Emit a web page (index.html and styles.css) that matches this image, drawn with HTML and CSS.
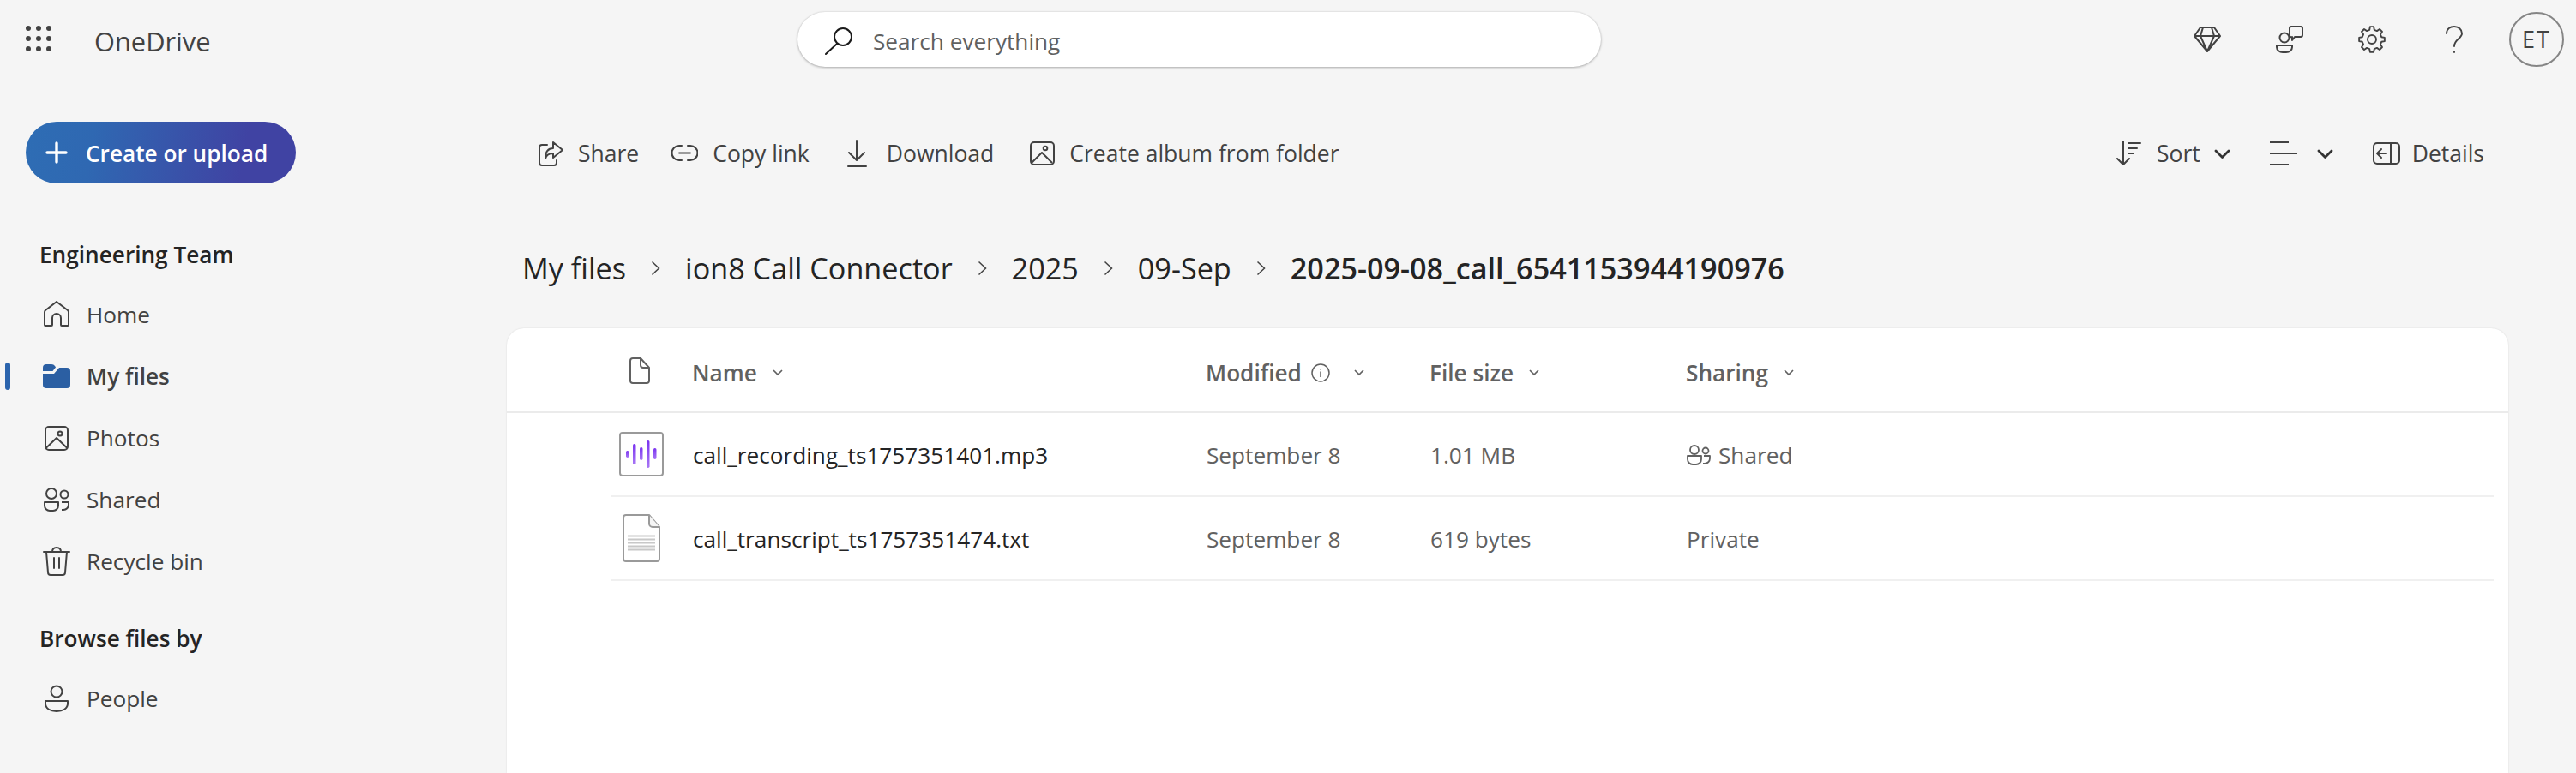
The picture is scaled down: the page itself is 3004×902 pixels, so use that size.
FILE: index.html
```html
<!DOCTYPE html>
<html lang="en">
<head>
<meta charset="utf-8">
<title>OneDrive</title>
<link rel="stylesheet" href="styles.css">
</head>
<body>
<header class="topbar">
  <div class="brand">
    <svg class="waffle" width="30" height="30" viewBox="0 0 30 30" fill="#424242"><circle cx="3" cy="3" r="3"/><circle cx="15" cy="3" r="3"/><circle cx="27" cy="3" r="3"/><circle cx="3" cy="15" r="3"/><circle cx="15" cy="15" r="3"/><circle cx="27" cy="15" r="3"/><circle cx="3" cy="27" r="3"/><circle cx="15" cy="27" r="3"/><circle cx="27" cy="27" r="3"/></svg>
    <span class="brand-name">OneDrive</span>
  </div>
  <div class="search">
    <svg class="search-ico" width="33" height="32" viewBox="0 0 33 32" fill="none" stroke="#1a1a1a" stroke-width="2" stroke-linecap="round"><circle cx="21" cy="11" r="10"/><path d="M14 19 1 31"/></svg>
    <span class="search-text">Search everything</span>
  </div>
  <div class="top-actions">
    <svg width="32" height="32" viewBox="0 0 32 32" fill="none" stroke="#424242" stroke-width="2" stroke-linejoin="round"><path d="M8 2h16l7 10-15 18L1 12zM1 12h30M11 2l-3 10 8 18 8-18-3-10"/></svg>
    <svg width="32" height="32" viewBox="0 0 32 32" fill="none" stroke="#424242" stroke-width="2" stroke-linejoin="round"><circle cx="10" cy="14" r="5.5"/><path d="M1 23h18v2a7 6 0 0 1-7 6H8a7 6 0 0 1-7-6z"/><path d="M18 1h11a2 2 0 0 1 2 2v8a2 2 0 0 1-2 2h-7l-3 4v-4a2 2 0 0 1-3-2V3a2 2 0 0 1 2-2z"/></svg>
    <svg width="32" height="32" viewBox="0 0 32 32" fill="none" stroke="#424242" stroke-width="1.9" stroke-linejoin="round"><polygon points="13.2,4.8 13.9,1.15 18.1,1.15 18.8,4.8 21.9,6.1 25,4 28,7 25.9,10.1 27.2,13.2 30.85,13.9 30.85,18.1 27.2,18.8 25.9,21.9 28,25 25,28 21.9,25.9 18.8,27.2 18.1,30.85 13.9,30.85 13.2,27.2 10.1,25.9 7,28 4,25 6.1,21.9 4.8,18.8 1.15,18.1 1.15,13.9 4.8,13.2 6.1,10.1 4,7 7,4 10.1,6.1"/><circle cx="16" cy="16" r="5"/></svg>
    <svg width="32" height="32" viewBox="0 0 32 32" fill="none" stroke="#424242" stroke-width="1.9" stroke-linecap="round"><path d="M7 9c0-5 4-8 9-8s9 3.500 9 8c0 6-9 7-9 15"/><path d="M16 30v1"/></svg>
    <div class="avatar">ET</div>
  </div>
</header>

<div class="page">
  <nav class="sidebar">
    <button class="create" type="button">
      <svg width="26" height="26" viewBox="0 0 26 26" fill="none" stroke="#fff" stroke-width="3.400" stroke-linecap="round"><path d="M13 2v22M2 13h22"/></svg>
      <span class="create-label">Create or upload</span>
    </button>
    <h2 class="nav-title nav-title-first">Engineering Team</h2>
    <a class="nav-item">
      <svg width="32" height="32" viewBox="0 0 32 32" fill="none" stroke="#424242" stroke-width="2" stroke-linejoin="round"><path d="M3 29a1 1 0 0 1-1-1V13a3 3 0 0 1 1-2L16 1l13 10a3 3 0 0 1 1 2v15a1 1 0 0 1-1 1h-7a1 1 0 0 1-1-1v-8a5 5 0 0 0-10 0v8a1 1 0 0 1-1 1z"/></svg>
      <span>Home</span>
    </a>
    <a class="nav-item nav-item-active">
      <svg width="32" height="28" viewBox="0 0 32 28" fill="#2b5fa3"><path d="M4 0h6c2 0 3 .7 4 2l1 1.500L11.500 8H0V4a4 4 0 0 1 4-4z"/><path d="M0 11h13l6-7h9a4 4 0 0 1 4 4v16a4 4 0 0 1-4 4H4a4 4 0 0 1-4-4z"/></svg>
      <span>My files</span>
    </a>
    <a class="nav-item">
      <svg width="32" height="30" viewBox="0 0 32 30" fill="none" stroke="#424242" stroke-width="2" stroke-linejoin="round"><rect x="3" y="2" width="26" height="27" rx="4"/><circle cx="20" cy="10" r="2.500"/><path d="M3.500 27 16 15l12.500 12"/></svg>
      <span>Photos</span>
    </a>
    <a class="nav-item">
      <svg width="32" height="30" viewBox="0 0 32 30" fill="none" stroke="#424242" stroke-width="2" stroke-linejoin="round"><circle cx="10" cy="8" r="6"/><circle cx="25" cy="9" r="4.500"/><path d="M2 18h16v4a6 6 0 0 1-6 6H8a6 6 0 0 1-6-6z"/><path d="M22 18h8v3a6 6 0 0 1-6 6h-2"/></svg>
      <span>Shared</span>
    </a>
    <a class="nav-item">
      <svg width="32" height="34" viewBox="0 0 32 34" fill="none" stroke="#424242" stroke-width="2" stroke-linecap="round"><path d="M1 6h30M11 6c0-3 2-5 5-5s5 2 5 5M4 6l2 24a3 3 0 0 0 3 3h14a3 3 0 0 0 3-3l2-24M13 13v12M19 13v12"/></svg>
      <span>Recycle bin</span>
    </a>
    <h2 class="nav-title nav-title-second">Browse files by</h2>
    <a class="nav-item">
      <svg width="32" height="32" viewBox="0 0 32 32" fill="none" stroke="#424242" stroke-width="2" stroke-linejoin="round"><circle cx="16" cy="8" r="6.500"/><path d="M3 19h26v3c0 6-6 9-13 9S3 28 3 22z"/></svg>
      <span>People</span>
    </a>
  </nav>

  <main class="content">
    <div class="toolbar">
      <div class="tool tool-share">
        <svg width="29" height="30" viewBox="0 0 29 30" fill="none" stroke="#424242" stroke-width="2" stroke-linejoin="round" stroke-linecap="round"><path d="M10 5H4a3 3 0 0 0-3 3v18a3 3 0 0 0 3 3h14a3 3 0 0 0 3-3v-3"/><path d="M17 2l11 9-11 9v-5c-5 0-8 2-9 6 0-8 3-12 9-12z"/></svg>
        <span>Share</span>
      </div>
      <div class="tool">
        <svg width="31" height="22" viewBox="0 0 31 22" fill="none" stroke="#424242" stroke-width="2" stroke-linecap="round"><path d="M12 2H9a8.500 8.500 0 0 0 0 17h3M19 2h3a8.500 8.500 0 0 1 0 17h-3M9 10.500h13"/></svg>
        <span>Copy link</span>
      </div>
      <div class="tool">
        <svg width="29" height="32" viewBox="0 0 29 32" fill="none" stroke="#424242" stroke-width="2" stroke-linecap="round" stroke-linejoin="round"><path d="M11 1v22M2 15l9 9 9-9M1 31h21"/></svg>
        <span>Download</span>
      </div>
      <div class="tool tool-album">
        <svg width="29" height="28" viewBox="0 0 29 28" fill="none" stroke="#424242" stroke-width="2" stroke-linejoin="round"><rect x="1" y="1" width="27" height="26" rx="4"/><circle cx="18" cy="8" r="2.300"/><path d="M2 25 14 13l12 12"/></svg>
        <span>Create album from folder</span>
      </div>
      <div class="toolbar-right">
        <svg class="gap-18" width="29" height="30" viewBox="0 0 29 30" fill="none" stroke="#424242" stroke-width="2" stroke-linecap="round" stroke-linejoin="round"><path d="M8 1v27M1 21l7 7 7-7M14 3h14M14 9h10M14 15h6"/></svg>
        <span class="gap-16">Sort</span>
        <svg width="19" height="11" viewBox="0 0 19 11" fill="none" stroke="#333" stroke-width="2.800" stroke-linecap="round" stroke-linejoin="round"><path d="M2 2l7.500 7.500L17 2"/></svg>
        <svg class="gap-23 push-46" width="32" height="28" viewBox="0 0 32 28" fill="none" stroke="#424242" stroke-width="2"><path d="M0 1h22M0 14h32M0 27h22"/></svg>
        <svg width="19" height="11" viewBox="0 0 19 11" fill="none" stroke="#333" stroke-width="2.800" stroke-linecap="round" stroke-linejoin="round"><path d="M2 2l7.500 7.500L17 2"/></svg>
        <svg class="gap-14 push-46" width="32" height="26" viewBox="0 0 32 26" fill="none" stroke="#424242" stroke-width="2" stroke-linecap="round" stroke-linejoin="round"><rect x="1" y="1" width="30" height="24" rx="4"/><path d="M21 1v24M16 13H6M10 8l-5 5 5 5"/></svg>
        <span>Details</span>
      </div>
    </div>

    <div class="crumbs">
      <span>My files</span>
      <svg class="crumb-sep" width="11" height="18" viewBox="0 0 11 18" fill="none" stroke="#424242" stroke-width="1.500"><path d="M1.500 1.500 9.500 9l-8 7.500"/></svg>
      <span>ion8 Call Connector</span>
      <svg class="crumb-sep" width="11" height="18" viewBox="0 0 11 18" fill="none" stroke="#424242" stroke-width="1.500"><path d="M1.500 1.500 9.500 9l-8 7.500"/></svg>
      <span>2025</span>
      <svg class="crumb-sep" width="11" height="18" viewBox="0 0 11 18" fill="none" stroke="#424242" stroke-width="1.500"><path d="M1.500 1.500 9.500 9l-8 7.500"/></svg>
      <span>09-Sep</span>
      <svg class="crumb-sep" width="11" height="18" viewBox="0 0 11 18" fill="none" stroke="#424242" stroke-width="1.500"><path d="M1.500 1.500 9.500 9l-8 7.500"/></svg>
      <span class="crumb-current">2025-09-08_call_6541153944190976</span>
    </div>

    <section class="card">
      <div class="table-head">
        <div class="cell">
          <svg class="head-doc" width="24" height="31" viewBox="0 0 24 31" fill="none" stroke="#616161" stroke-width="2" stroke-linejoin="round"><path d="M4 1h9l10 11v15a3 3 0 0 1-3 3H4a3 3 0 0 1-3-3V4a3 3 0 0 1 3-3z"/><path d="M13 1v8a3 3 0 0 0 3 3h7"/></svg>
        </div>
        <div class="cell">Name<svg class="sort-chev" width="12" height="8" viewBox="0 0 12 8" fill="none" stroke="#616161" stroke-width="1.700"><path d="M1 1l5 5 5-5"/></svg></div>
        <div class="cell">Modified<svg class="info" width="22" height="22" viewBox="0 0 22 22" fill="none" stroke="#616161" stroke-width="1.500"><circle cx="11" cy="11" r="10"/><path d="M11 9.500V16M11 6v1.500"/></svg><svg class="sort-chev sort-chev-wide" width="12" height="8" viewBox="0 0 12 8" fill="none" stroke="#616161" stroke-width="1.700"><path d="M1 1l5 5 5-5"/></svg></div>
        <div class="cell">File size<svg class="sort-chev" width="12" height="8" viewBox="0 0 12 8" fill="none" stroke="#616161" stroke-width="1.700"><path d="M1 1l5 5 5-5"/></svg></div>
        <div class="cell">Sharing<svg class="sort-chev" width="12" height="8" viewBox="0 0 12 8" fill="none" stroke="#616161" stroke-width="1.700"><path d="M1 1l5 5 5-5"/></svg></div>
      </div>

      <div class="row">
        <div class="cell">
          <svg class="file-mp3" width="52" height="52" viewBox="0 0 52 52" fill="none">
            <defs><linearGradient id="wave" x1="0" y1="0" x2="0" y2="1"><stop offset="0" stop-color="#7a33f0"/><stop offset="1" stop-color="#a877f5"/></linearGradient></defs>
            <rect x="1" y="1" width="50" height="50" rx="3" fill="#fff" stroke="#9a9a9a" stroke-width="2"/>
            <rect x="8" y="22" width="3.500" height="8" rx="1.700" fill="url(#wave)"/>
            <rect x="16" y="14" width="3.500" height="24" rx="1.700" fill="url(#wave)"/>
            <rect x="24" y="18" width="3.500" height="15" rx="1.700" fill="url(#wave)"/>
            <rect x="32" y="10" width="3.500" height="32" rx="1.700" fill="url(#wave)"/>
            <rect x="40" y="19" width="3.500" height="13" rx="1.700" fill="url(#wave)"/>
          </svg>
        </div>
        <div class="cell name">call_recording_ts1757351401.mp3</div>
        <div class="cell sub">September 8</div>
        <div class="cell sub">1.01 MB</div>
        <div class="cell sub">
          <svg class="share-ico" width="28" height="25" viewBox="0 0 28 25" fill="none" stroke="#616161" stroke-width="1.800" stroke-linejoin="round"><circle cx="9" cy="6" r="5"/><circle cx="22" cy="7" r="3.500"/><path d="M1 13h16v4a6 6 0 0 1-6 6H7a6 6 0 0 1-6-6z"/><path d="M20 13h7v3a6 6 0 0 1-6 6h-2"/></svg>Shared
        </div>
      </div>

      <div class="row">
        <div class="cell">
          <svg class="file-txt" width="44" height="56" viewBox="0 0 44 56" fill="#fff">
            <path d="M4 1h27l12 14v37a3 3 0 0 1-3 3H4a3 3 0 0 1-3-3V4a3 3 0 0 1 3-3z" stroke="#9a9a9a" stroke-width="2" stroke-linejoin="round"/>
            <path d="M31 1v10a4 4 0 0 0 4 4h8" stroke="#9a9a9a" stroke-width="2" fill="#f5f5f5"/>
            <path d="M6 25.500h32M6 29.500h32M6 33.500h32M6 37.500h32M6 41.500h32" stroke="#c8c8c8" stroke-width="2"/>
          </svg>
        </div>
        <div class="cell name">call_transcript_ts1757351474.txt</div>
        <div class="cell sub">September 8</div>
        <div class="cell sub">619 bytes</div>
        <div class="cell sub">Private</div>
      </div>
    </section>
  </main>
</div>
</body>
</html>
```
FILE: styles.css
```css
* { box-sizing: border-box; }
html, body { margin: 0; height: 902px; overflow: hidden; }
body {
  width: 3004px;
  background: #f5f5f5;
  color: #424242;
  font: 400 26.2px/36px "Open Sans", "Noto Sans", sans-serif;
  display: flex;
  flex-direction: column;
}
svg { display: block; flex: none; }

/* top bar */
.topbar { height: 96px; display: flex; align-items: center; flex: none; }
.brand { flex: 0 0 930px; display: flex; align-items: center; padding-left: 30px; }
.waffle { margin-bottom: 6px; }
.brand-name { margin-left: 50px; font-size: 30.800px; font-weight: 500; color: #424242; }
.search {
  flex: 0 0 937px; height: 64px; margin-bottom: 4px; border-radius: 32px; background: #fff;
  box-shadow: 0 1px 3px rgba(0,0,0,.28), 0 0 2px rgba(0,0,0,.12);
  display: flex; align-items: center; padding-left: 32px; gap: 23px;
}
.search-ico { margin-top: 3px; }
.search-text { color: #616161; margin-top: 4px; }
.top-actions { flex: 1; display: flex; align-items: center; justify-content: flex-end; gap: 64px; padding-right: 14px; padding-bottom: 4px; }
.avatar {
  width: 64px; height: 64px; border-radius: 50%; border: 2px solid #858585;
  display: flex; align-items: center; justify-content: center; margin-left: -16px;
  font-size: 27px; letter-spacing: 2px; color: #424242;
}

/* layout */
.page { flex: 1; display: grid; grid-template-columns: 591px 1fr; min-height: 0; }

/* sidebar */
.sidebar { display: flex; flex-direction: column; padding-top: 46px; }
.create {
  width: 315px; height: 72px; margin-left: 30px; border: 0; border-radius: 36px;
  background: linear-gradient(100deg, #2e6db4 0%, #2f68b2 25%, #4043a3 80%, #4043a3 100%);
  color: #fff; font: 600 26.200px "Open Sans", sans-serif;
  display: flex; align-items: center; gap: 21px; padding: 0 0 0 23px;
}
.create-label { margin-top: 2px; }
.nav-title { margin: 0 0 0 46px; height: 40px; line-height: 40px; font-size: 26.200px; font-weight: 600; color: #242424; }
.nav-title-first { margin-top: 63px; margin-bottom: 14px; }
.nav-title-second { margin-top: 34px; margin-bottom: 14px; }
.nav-item { height: 72px; display: flex; align-items: center; padding-left: 50px; gap: 19px; position: relative; }
.nav-item-active { font-weight: 600; }
.nav-item-active::before {
  content: ""; position: absolute; left: 6px; top: 20px; width: 6px; height: 32px;
  border-radius: 3px; background: #2b64ad;
}

/* content */
.content { display: flex; flex-direction: column; min-height: 0; }
.toolbar { height: 72px; margin-top: 47px; display: flex; align-items: center; gap: 44px; padding: 0 107px 0 37px; flex: none; font-size: 26.500px; }
.tool { display: flex; align-items: center; gap: 17px; }
.tool-share { margin-right: -6px; }
.tool-album { margin-left: -2px; }
.toolbar-right { margin-left: auto; display: flex; align-items: center; }
.gap-18 { margin-right: 18px; }
.gap-16 { margin-right: 16px; }
.gap-23 { margin-right: 23px; }
.gap-14 { margin-right: 14px; }
.push-46 { margin-left: 46px; }

.crumbs { height: 60px; margin-top: 68px; padding-left: 18px; display: flex; align-items: center; font-size: 34.200px; color: #242424; flex: none; }
.crumb-sep { margin: 0 29px; }
.crumb-current { font-weight: 600; }

.card {
  flex: 1; margin: 40px 79px 0 0; background: #fff;
  border-radius: 20px 20px 0 0;
  box-shadow: 0 0 2px rgba(0,0,0,.12);
}
.table-head, .row { display: grid; grid-template-columns: 96px 599px 261px 299px 1fr; align-items: center; }
.table-head { height: 99px; padding: 7px 0 0 120px; border-bottom: 2px solid #ebebeb; font-weight: 600; color: #616161; }
.row { height: 98px; margin: 0 17px 0 121px; border-bottom: 2px solid #f0f0f0; }
.cell { display: flex; align-items: center; white-space: nowrap; }
.name { color: #242424; padding-top: 2px; }
.sub { color: #616161; padding-top: 2px; }
.head-doc { margin-left: 23px; margin-top: -6px; }
.sort-chev { margin-left: 18px; }
.sort-chev-wide { margin-left: 28px; }
.info { margin-left: 11px; }
.file-mp3 { margin-left: 10px; }
.file-txt { margin-left: 14px; }
.share-ico { margin-right: 9px; }
```
